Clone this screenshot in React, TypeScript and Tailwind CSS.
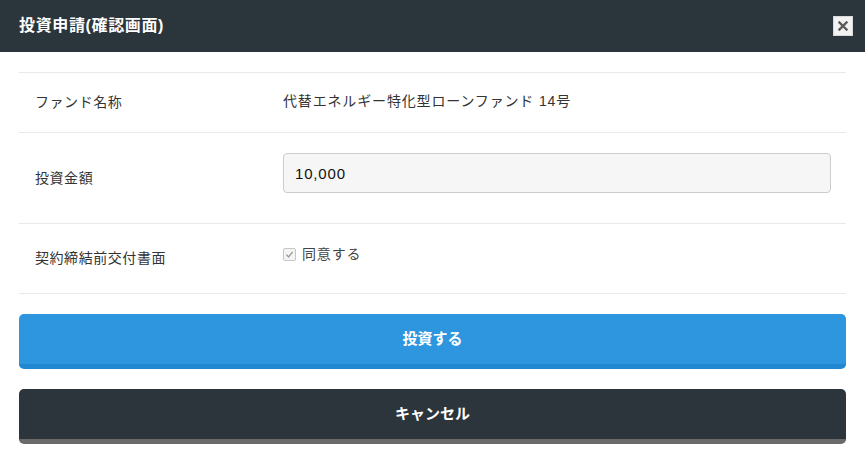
const font = { fontFamily: '"Liberation Sans", "Noto Sans CJK JP", sans-serif' };

function Row({
  label,
  children,
  className,
}: {
  label: string;
  children: React.ReactNode;
  className: string;
}) {
  return (
    <div className={"flex border-b border-[#e9e9e9] " + className}>
      <div className="w-[264px] shrink-0 pl-4 flex items-center text-[14px] tracking-[0.04em] text-[#333]">
        {label}
      </div>
      <div className="flex-1 pr-[15px] text-[14px] tracking-[0.06em] text-[#333]">{children}</div>
    </div>
  );
}

export default function App() {
  return (
    <div className="w-[865px] h-[462px] bg-white overflow-hidden" style={font}>
      <header className="h-[52px] bg-[#2b353c] flex items-center justify-between pl-[19px] pr-[12px]">
        <h1 className="text-white font-bold text-[16px] tracking-[0.04em]">投資申請(確認画面)</h1>
        <button className="w-[20px] h-[20px] bg-[#f2f2f2] border border-[#d9d9d9] flex items-center justify-center">
          <svg width="10" height="10" viewBox="0 0 10 10">
            <path d="M1.5 1.5 L8.5 8.5 M8.5 1.5 L1.5 8.5" stroke="#5a5a5a" strokeWidth="2.4" strokeLinecap="square" />
          </svg>
        </button>
      </header>

      <main className="px-[19px] pt-[20px]">
        <div className="border-t border-[#e9e9e9]">
          <Row label="ファンド名称" className="h-[60px]">
            <div className="h-full flex items-center pb-[2px]">代替エネルギー特化型ローンファンド 14号</div>
          </Row>
          <Row label="投資金額" className="h-[91px]">
            <div className="pt-[20px]">
              <input
                readOnly
                value="10,000"
                className="w-full h-[40px] rounded-[4px] border border-[#cccccc] bg-[#f6f6f6] px-[11px] text-[15px] text-[#111] outline-none"
                style={font}
              />
            </div>
          </Row>
          <Row label="契約締結前交付書面" className="h-[70px]">
            <label className="pt-[20px] flex items-center gap-[6px] text-[#444]">
              <span className="w-[13px] h-[13px] rounded-[2px] border border-[#c6c6c6] bg-[#f4f4f4] flex items-center justify-center">
                <svg width="9" height="9" viewBox="0 0 9 9">
                  <path d="M1.5 4.8 L3.6 7 L7.6 1.8" fill="none" stroke="#9a9a9a" strokeWidth="1.3" />
                </svg>
              </span>
              同意する
            </label>
          </Row>
        </div>

        <button className="mt-[20px] w-full h-[55px] rounded-[5px] bg-[#2d96de] border-b-[5px] border-[#1f88d1] text-white font-bold text-[15px] flex items-center justify-center">
          投資する
        </button>
        <button className="mt-[20px] w-full h-[55px] rounded-[5px] bg-[#2c353b] border-b-[5px] border-[#6a6a6a] text-white font-bold text-[15px] flex items-center justify-center">
          キャンセル
        </button>
      </main>
    </div>
  );
}
